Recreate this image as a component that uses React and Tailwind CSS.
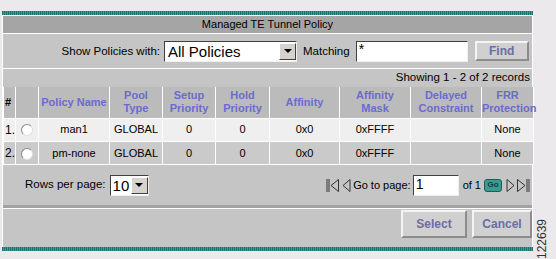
const teal =
  "h-[4px] bg-[repeating-linear-gradient(90deg,#1d6f68_0_1px,#3f9d94_1px_2px)]";

const headers = [
  [["#"], "w-[12px]", "text-black text-left pl-[1px]"],
  [[], "w-[23px]", ""],
  [["Policy Name"], "w-[71px]", ""],
  [["Pool", "Type"], "w-[53px]", ""],
  [["Setup", "Priority"], "w-[53px]", ""],
  [["Hold", "Priority"], "w-[54px]", ""],
  [["Affinity"], "w-[70px]", ""],
  [["Affinity", "Mask"], "w-[71px]", ""],
  [["Delayed", "Constraint"], "w-[71px]", ""],
  [["FRR", "Protection"], "w-[52px]", ""],
];

const rows = [
  { n: "1.", name: "man1", bg: "bg-[#efefef]" },
  { n: "2.", name: "pm-none", bg: "bg-[#cacaca]" },
];

const Radio = () => (
  <span className="inline-block align-middle w-[12px] h-[12px] rounded-full bg-white border border-[#8a8a8a] border-r-[#e0e0e0] border-b-[#e0e0e0]" />
);

const DropBtn = ({ h }) => (
  <span className={`w-[17px] ${h} shrink-0 bg-[#d6d3ce] border border-t-white border-l-white border-r-[#404040] border-b-[#404040] flex items-center justify-center`}>
    <span className="w-0 h-0 border-x-[4px] border-x-transparent border-t-[4px] border-t-black" />
  </span>
);

const Btn = ({ children, className }) => (
  <button className={`shrink-0 bg-[#d0d0d0] border-2 border-t-[#f4f4f4] border-l-[#f4f4f4] border-r-[#8c8c8c] border-b-[#8c8c8c] font-bold text-[#6c6ca6] text-[12px] ${className}`}>
    {children}
  </button>
);

const inset = "bg-white border border-[#404040] border-b-[#f0f0f0] border-r-[#f0f0f0] shrink-0";

export default function App() {
  return (
    <div className="w-[556px] h-[259px] bg-[#ebe9eb] font-['Liberation_Sans',Arial,sans-serif] text-[11px] text-black overflow-hidden flex">
      <div className="w-[531px] ml-[2px] mt-[11px] shrink-0">
        <div className={teal} />
        <div className="border-x border-t border-white bg-[#c5c5c5]">
          <div className="h-[18px] bg-[#a5a5a5] border-b border-white flex items-center justify-center">
            Managed TE Tunnel Policy
          </div>
          <div className="h-[35px] border-b border-white flex items-center whitespace-nowrap text-[11.5px]">
            <span className="w-[157px] shrink-0 text-right mt-[2px]">Show Policies with:</span>
            <div className={`ml-[4px] w-[133px] h-[21px] flex items-center ${inset}`}>
              <span className="flex-1 pl-[3px] text-[15px] leading-none">All Policies</span>
              <DropBtn h="h-[17px]" />
            </div>
            <span className="ml-[6px] shrink-0 mt-[2px]">Matching</span>
            <div className={`ml-[6px] w-[112px] h-[21px] pl-[2px] leading-[14px] text-[14px] ${inset}`}>
              *
            </div>
            <Btn className="ml-[7px] w-[54px] h-[20px] leading-none">Find</Btn>
          </div>
          <div className="h-[18px] flex items-center justify-end pr-[2px] text-[11.5px]">
            Showing 1 - 2 of 2 records
          </div>
          <table className="table-fixed w-full border-collapse">
            <thead>
              <tr className="h-[31px] bg-[#bbbbbb]">
                {headers.map(([lines, w, c], i) => (
                  <th
                    key={i}
                    className={`${w} border-x border-white p-0 text-[11px] leading-[13px] font-bold whitespace-nowrap ${c || "text-[#6b6bcf] text-center"}`}
                  >
                    {lines.map((p, j) => (
                      <div key={j}>{p}</div>
                    ))}
                  </th>
                ))}
              </tr>
            </thead>
            <tbody>
              {rows.map((r) => (
                <tr key={r.n} className={`h-[23px] ${r.bg} border-t border-white`}>
                  <td className="border-x border-white p-0 pl-[1px] text-[12px]">{r.n}</td>
                  <td className="border-x border-white p-0 pl-[5px]"><Radio /></td>
                  <td className="border-x border-white p-0 text-center">{r.name}</td>
                  <td className="border-x border-white p-0 text-center">GLOBAL</td>
                  <td className="border-x border-white p-0 text-center">0</td>
                  <td className="border-x border-white p-0 text-center">0</td>
                  <td className="border-x border-white p-0 text-center">0x0</td>
                  <td className="border-x border-white p-0 text-center">0xFFFF</td>
                  <td className="border-x border-white p-0 text-center"></td>
                  <td className="border-x border-white p-0 text-center">None</td>
                </tr>
              ))}
            </tbody>
          </table>
          <div className="h-[41px] border-t border-white flex items-center text-[11.5px] whitespace-nowrap">
            <span className="ml-[22px] shrink-0">Rows per page:</span>
            <div className={`ml-[4px] w-[39px] h-[21px] flex items-center ${inset}`}>
              <span className="flex-1 pl-[2px] text-[15px] leading-none">10</span>
              <DropBtn h="h-[17px]" />
            </div>
            <div className="flex-1" />
            <svg width="14" height="15" viewBox="0 0 14 15" className="mr-[2px]">
              <path d="M1 1v13M3 1v13" stroke="#333" strokeWidth="1" fill="none" />
              <path d="M12.5 1.5L5 7.5l7.5 6z" stroke="#333" strokeWidth="1" fill="none" />
            </svg>
            <svg width="9" height="15" viewBox="0 0 9 15" className="mr-[2px]">
              <path d="M8 1.5L1 7.5l7 6z" stroke="#333" strokeWidth="1" fill="none" />
            </svg>
            <span className="text-[11px]">Go to page:</span>
            <div className={`ml-[2px] w-[46px] h-[21px] pl-[2px] text-[14px] leading-[17px] ${inset}`}>
              1
            </div>
            <span className="ml-[4px] text-[11px]">of 1</span>
            <span className="ml-[3px] w-[18px] h-[13px] rounded-[3px] bg-[#3c9a92] border border-[#1e5e58] text-[8px] font-bold text-[#10403c] flex items-center justify-center">
              Go
            </span>
            <svg width="9" height="15" viewBox="0 0 9 15" className="ml-[4px]">
              <path d="M1 1.5l7 6-7 6z" stroke="#333" strokeWidth="1" fill="none" />
            </svg>
            <svg width="14" height="15" viewBox="0 0 14 15" className="ml-[1px] mr-[2px]">
              <path d="M1.5 1.5l7.5 6-7.5 6z" stroke="#333" strokeWidth="1" fill="none" />
              <path d="M11 1v13M13 1v13" stroke="#333" strokeWidth="1" fill="none" />
            </svg>
          </div>
          <div className="h-[3px] bg-[#a2a2a2]" />
          <div className="h-[39px] border-t border-white flex items-start justify-end pt-[1px]">
            <Btn className="w-[66px] h-[28px]">Select</Btn>
            <Btn className="ml-[5px] w-[60px] h-[28px]">Cancel</Btn>
          </div>
        </div>
        <div className={teal} />
      </div>
      <div className="flex-1 relative">
        <span className="absolute left-[9px] top-[229px] -rotate-90 origin-left text-[12px] text-[#333] whitespace-nowrap leading-none translate-y-[24px]">
          122639
        </span>
      </div>
    </div>
  );
}
